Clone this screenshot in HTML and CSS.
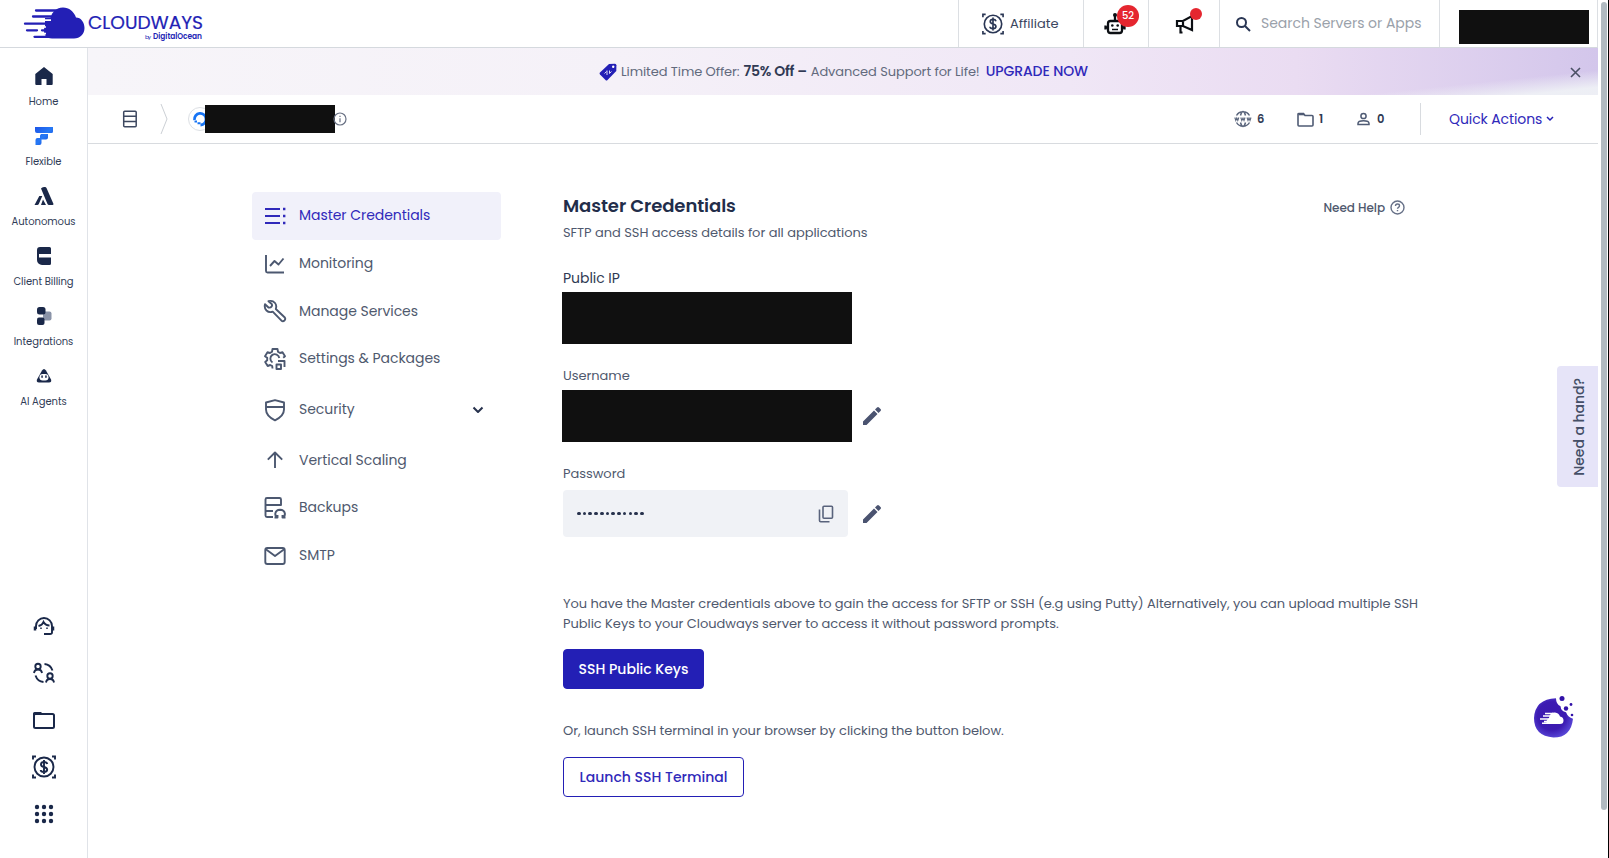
FILE: index.html
```html
<!DOCTYPE html>
<html lang="en">
<head>
    <meta charset="UTF-8">
    <title>Master Credentials</title>
    <link rel="stylesheet" href="styles.css">
</head>
<body>
    <div class="page">
        <header class="topbar">
            <a class="logo" href="#">
                <svg width="184" height="38" viewBox="0 0 184 38">
                    <g fill="#231fb5">
                        <path d="M29 33.500c-6 0-8-4-8-8 0-5 3-8 6-9 0-8 6-14 13-14 6 0 11 4 13 10 5 0 8.500 5 8.500 10.500 0 6-4.500 10.500-10.500 10.500z"/>
                        <path d="M22 13h10v12H22z"/>
                    </g>
                    <g stroke="#231fb5" stroke-width="2.300" stroke-linecap="round">
                        <path d="M13 5.500h22M10 11.500h18M2 18.700h22M4 25.300h10M19 25.300h5M11.500 31.800h20"/>
                    </g>
                    <path d="M18 15.100h10M14 22h9M17 28.600h6" stroke="#fff" stroke-width="1.600"/>
                    <text class="logo-name" x="65" y="24" textLength="115" lengthAdjust="spacingAndGlyphs">CLOUDWAYS</text>
                    <text class="logo-by" x="122" y="33.500" textLength="6">by</text>
                    <text class="logo-do" x="130" y="33.500" textLength="49" lengthAdjust="spacingAndGlyphs">DigitalOcean</text>
                </svg>
            </a>
            <div class="top-cell affiliate">
                <svg width="22" height="22" viewBox="0 0 24 24" fill="none" stroke="#2a3654" stroke-width="1.800">
                    <use href="#dollar"/>
                </svg>
                <span>Affiliate</span>
            </div>
            <div class="top-cell robot">
                <svg width="22" height="23" viewBox="0 0 22 23" fill="none" stroke="#0c0f14" stroke-width="2.300">
                    <rect x="4" y="9" width="14" height="12" rx="2.500"/>
                    <path d="M11 9V3M1.500 13.500v4M20.500 13.500v4M1 15.500h3M18 15.500h3"/>
                    <path d="M8 17.500h6" stroke-width="1.500"/>
                    <g fill="#0c0f14" stroke="none"><circle cx="8.300" cy="13.500" r="1.300"/><circle cx="13.700" cy="13.500" r="1.300"/><circle cx="11" cy="3" r="2"/></g>
                </svg>
                <span class="badge">52</span>
            </div>
            <div class="top-cell news">
                <svg width="20" height="20" viewBox="0 0 20 20" fill="none" stroke="#0c0f14" stroke-width="2.200">
                    <path d="M2 7h6l9-5v14l-9-4H2zM8 7v5M5.500 12v6.500h2M17 6.500v5"/>
                </svg>
                <span class="dot"></span>
            </div>
            <div class="top-cell search">
                <svg width="16" height="16" viewBox="0 0 16 16" fill="none" stroke="#2a3654" stroke-width="2">
                    <circle cx="6.500" cy="6.500" r="4.500"/><path d="M10 10l5 5"/>
                </svg>
                <span>Search Servers or Apps</span>
            </div>
            <div class="top-cell account"><div class="redacted account-box"></div></div>
        </header>

        <aside class="sidebar">
            <nav class="side-top">
                <a href="#"><svg width="20" height="20" viewBox="0 0 20 20"><path fill="#1a2849" d="M10 1l8.700 7v10a1 1 0 0 1-1 1H12.500v-6h-5v6H2.300a1 1 0 0 1-1-1V8z"/></svg>Home</a>
                <a href="#"><svg width="20" height="20" viewBox="0 0 20 20"><defs><linearGradient id="flex" x1="0" y1="0" x2="1" y2="1"><stop offset="0" stop-color="#1d55e8"/><stop offset=".5" stop-color="#2679f5"/><stop offset="1" stop-color="#1744d2"/></linearGradient></defs><path fill="url(#flex)" d="M1 1h18v4.500a1.500 1.500 0 0 1-1.500 1.500H3a2 2 0 0 1-2-2zM7 8h7v3.500a2 2 0 0 1-2 2H7.500V17a2 2 0 0 1-2 2H1.500v-5a2 2 0 0 1 2-2H6V9.500z"/></svg>Flexible</a>
                <a href="#"><svg width="20" height="20" viewBox="0 0 20 20"><path fill="#1a2849" d="M7 2.500Q8 1 10 1h1q1 0 1.500 1L19.500 18q0 1-1 1H15q-1 0-1.500-1zM5.300 10h3L4.800 18q-.5 1-1.500 1H.5zM9 13.500l3 5.500H7z"/></svg>Autonomous</a>
                <a href="#"><svg width="20" height="20" viewBox="0 0 20 20"><path fill="#1a2849" d="M6 1h9.500a1.500 1.500 0 0 1 1.500 1.500V8H5v3.500h12v6a1.500 1.500 0 0 1-1.500 1.500H8a5 5 0 0 1-5-5V4a3 3 0 0 1 3-3z"/></svg>Client Billing</a>
                <a href="#"><svg width="20" height="20" viewBox="0 0 20 20"><rect x="9" y="5.500" width="8.500" height="9" rx="2" fill="#8a93a8"/><rect x="3" y="1" width="8.500" height="7.500" rx="2.500" fill="#1a2849"/><rect x="3" y="11.500" width="7.500" height="7.500" rx="2" fill="#1a2849"/></svg>Integrations</a>
                <a href="#"><svg width="20" height="20" viewBox="0 0 20 20"><path fill="#1a2849" d="M8 4.500q2-3 4 0l5 9q1 3-2 3H5q-3 0-2-3z"/><rect x="5.500" y="8" width="9" height="6.500" rx="3.200" fill="#fff"/><rect x="7.300" y="9.300" width="1.500" height="2.600" rx=".7" fill="#1a2849"/><rect x="11.200" y="9.300" width="1.500" height="2.600" rx=".7" fill="#1a2849"/></svg>AI Agents</a>
            </nav>
            <nav class="side-bottom">
                <svg width="24" height="24" viewBox="0 0 24 24" fill="none" stroke="#1a2849" stroke-width="1.900">
                    <path d="M4 15v-3a8 8 0 0 1 16 0v6.500q0 1.500-2 1.500h-6M6.500 12q4-1 5-4 2 3.500 6 3.500"/><path d="M3 12.500v4M21 12.500v4" stroke-width="2.500"/><path d="M9 13.500v1.500M15 13.500v1.500" stroke-width="1.500"/>
                </svg>
                <svg width="24" height="24" viewBox="0 0 24 24" fill="none" stroke="#1a2849" stroke-width="1.900">
                    <circle cx="6" cy="5.500" r="2.700"/><path d="M2 12q.5-3.500 4-3.500t4 3.500"/><circle cx="18" cy="15" r="2.700"/><path d="M14 21.500q.5-3.500 4-3.500t4 3.500M12.500 3q6 .5 8 6.500M3.500 14.500q2 6 8 6.500"/>
                </svg>
                <svg width="24" height="24" viewBox="0 0 24 24" fill="none" stroke="#1a2849" stroke-width="2">
                    <rect x="2" y="6" width="20" height="14" rx="1.500"/><path fill="#1a2849" stroke="none" d="M1 7V5.500Q1 4 2.500 4H9l2.500 2.500z"/>
                </svg>
                <svg width="24" height="24" viewBox="0 0 24 24" fill="none" stroke="#1a2849" stroke-width="1.900">
                    <g id="dollar"><circle cx="12" cy="12" r="9.500"/><path d="M15.300 9q-.6-2-3.300-2-3 0-3 2.400 0 2 3 2.600t3.200 2.600q0 2.400-3.200 2.400T8.700 15M12 5v14"/><path d="M1 4.500V1.500h3M20 1.500h3v3M1 19.500v3h3M20 22.500h3v-3"/></g>
                </svg>
                <svg width="24" height="24" viewBox="0 0 24 24" fill="#1a2849">
                    <circle cx="5" cy="5" r="2.200"/><circle cx="12" cy="5" r="2.200"/><circle cx="19" cy="5" r="2.200"/>
                    <circle cx="5" cy="12" r="2.200"/><circle cx="12" cy="12" r="2.200"/><circle cx="19" cy="12" r="2.200"/>
                    <circle cx="5" cy="19" r="2.200"/><circle cx="12" cy="19" r="2.200"/><circle cx="19" cy="19" r="2.200"/>
                </svg>
            </nav>
        </aside>

        <main class="main">
            <div class="promo">
                <svg width="18" height="18" viewBox="0 0 18 18"><path fill="#231fb5" d="M10 1l6-.3q1.300 0 1.400 1.500L17.300 8 8.500 17q-1 1-2 0L1 11.500q-1-1 0-2z"/><circle cx="14.200" cy="3.800" r="1.200" fill="#fff"/><path d="M5.500 10.500l2-2M8 12V7.500M10.500 7.500v3l2-2" stroke="#d9d8f5" fill="none"/></svg>
                <span class="promo-lead">Limited Time Offer:</span>
                <b>75% Off –</b>
                <span class="promo-rest">Advanced Support for Life!</span>
                <a href="#">UPGRADE NOW</a>
                <svg class="promo-close" width="11" height="11" viewBox="0 0 11 11" stroke="#4a5064" stroke-width="1.600"><path d="M1 1l9 9M10 1l-9 9"/></svg>
            </div>

            <div class="serverbar">
                <svg class="server-icon" width="16" height="18" viewBox="0 0 16 18" fill="none" stroke="#3d4860" stroke-width="1.500"><rect x="1.700" y="1.200" width="12.500" height="15.500" rx="1"/><path d="M2 6.300h12M2 11.500h12"/></svg>
                <svg class="crumb" width="8" height="32" viewBox="0 0 8 32" fill="none" stroke="#ccd0d5"><path d="M1 1l6 15-6 15"/></svg>
                <span class="provider"><svg width="16" height="16" viewBox="0 0 16 16" fill="none" stroke="#1674f5" stroke-width="2.800"><path d="M2.500 9A5.800 5.800 0 1 1 8.500 14"/><path d="M5.500 12.200h3M2.500 10.500h2.500" stroke-width="2"/></svg></span>
                <div class="redacted name-box"></div>
                <svg class="info" width="14" height="14" viewBox="0 0 14 14" fill="none" stroke="#697184" stroke-width="1.200"><circle cx="7" cy="7" r="6"/><path d="M7 6.300v4M7 3.700v1.400"/></svg>
                <div class="stat stat-www">
                    <svg width="18" height="18" viewBox="0 0 18 18" fill="none" stroke="#5b667d" stroke-width="1.500"><path d="M2.500 5.500a7.500 7.500 0 0 1 13 0M2.500 12.500a7.500 7.500 0 0 0 13 0M6.500 5.500Q7.300 2 9 1.500q1.700.5 2.500 4M6.500 12.500q.8 3.500 2.500 4 1.700-.5 2.500-4"/><path stroke-width="1.100" d="M.8 7.500l1 3 1-2.500 1 2.500 1-3M6.800 7.500l1 3L9 8l1 2.500 1-3M13 7.500l1 3 1-2.500 1 2.500 1-3"/></svg>6
                </div>
                <div class="stat stat-apps">
                    <svg width="17" height="15" viewBox="0 0 17 15" fill="none" stroke="#4f5b74" stroke-width="1.600"><path d="M1 2v11q0 1 1 1h13q1 0 1-1V4.500q0-1-1-1H8L6.500 1.500H2Q1 1.500 1 2z"/><path d="M1.500 2.300H7" stroke-width="2"/></svg>1
                </div>
                <div class="stat stat-users">
                    <svg width="13" height="14" viewBox="0 0 13 14" fill="none" stroke="#4f5b74" stroke-width="1.500"><circle cx="6.500" cy="4" r="2.600"/><path d="M1 12.500v-1q0-2.700 5.500-2.700T12 11.500v1z"/></svg>0
                </div>
                <div class="quick">Quick Actions <svg width="8" height="6" viewBox="0 0 8 6" fill="none" stroke="#231fb5" stroke-width="1.500"><path d="M1 1l3 3 3-3"/></svg></div>
            </div>

            <div class="content">
                <nav class="menu">
                    <a class="active" href="#"><svg width="24" height="24" viewBox="0 0 24 24"><path d="M2 5h15M2 12h15M2 19h15"/><path d="M20 5h2.400M20 12h2.400M20 19h2.400" stroke-width="2.400"/></svg>Master Credentials</a>
                    <a href="#"><svg width="24" height="24" viewBox="0 0 24 24"><path d="M3 3v16q0 1.500 1.500 1.500H21M7 14l4.500-5 4 3.500 5-6"/></svg>Monitoring</a>
                    <a href="#"><svg width="24" height="24" viewBox="0 0 24 24"><path d="M5.500 2.200Q9.500 1 12 4q2 2.500.8 6l9 8.500q1 1.500-.3 3-1.500 1.200-3 .2l-8.800-9Q6 14 3.500 11.500 1 8.800 2 5.200l3.500 3.300Q7.500 9 8.500 7.700 9.500 6.500 8.700 5z"/></svg>Manage Services</a>
                    <a href="#"><svg width="24" height="24" viewBox="0 0 24 24"><path d="M9.500 21.500l-.3-2.500-2-1-2.500 1-2.500-4 2-1.700v-2.600L2 9.200l2.500-4L7 6l2-1.200.5-2.800h5l.5 2.800L17 6l2.500-.8 2.500 4-1.800 1.500"/><path d="M9.500 15.500A4.500 4.500 0 1 1 16.300 11"/><rect x="13.500" y="17.500" width="4.500" height="4.500"/><path d="M15 14h6.500v6"/></svg>Settings &amp; Packages</a>
                    <a class="has-sub" href="#"><svg width="24" height="24" viewBox="0 0 24 24"><path d="M12 2.200l9 2.300v7q0 6.500-9 10.800Q3 18 3 11.500v-7zM3 9h18"/></svg>Security<svg class="arrow" width="12" height="8" viewBox="0 0 12 8"><path d="M1.500 1.500L6 6l4.500-4.500"/></svg></a>
                    <a href="#"><svg width="24" height="24" viewBox="0 0 24 24"><path d="M12 20V4.500M4.800 11.700L12 4.500l7.200 7.200"/></svg>Vertical Scaling</a>
                    <a href="#"><svg width="24" height="24" viewBox="0 0 24 24"><path d="M10 21H4q-1.500 0-1.500-1.500v-16Q2.500 2 4 2h12.500Q18 2 18 3.500V9H2.500M10 15H2.500"/><path d="M14.500 21.500q-2.500-1.500-2.200-4 .7-3.500 4.700-3.700 4.200.2 4.900 3.700.3 2.500-2.200 4M11.500 21.500h3v-2.500M22.500 21.500h-3v-2.500"/></svg>Backups</a>
                    <a href="#"><svg width="24" height="24" viewBox="0 0 24 24"><rect x="2.300" y="4" width="19.400" height="16" rx="2"/><path d="M2.500 5l9.500 7 9.500-7"/></svg>SMTP</a>
                </nav>

                <section class="panel">
                    <div class="panel-head">
                        <h1>Master Credentials</h1>
                        <div class="help">Need Help <svg width="15" height="15" viewBox="0 0 15 15" fill="none" stroke="#667087" stroke-width="1.400"><circle cx="7.500" cy="7.500" r="6.500"/><path d="M5.500 6q0-2 2-2t2 1.700q0 1-1 1.600t-1 1.400M7.500 10v1.300"/></svg></div>
                    </div>
                    <p class="subtitle">SFTP and SSH access details for all applications</p>

                    <label class="label-ip">Public IP</label>
                    <div class="redacted field-box"></div>

                    <label class="label-user">Username</label>
                    <div class="field-row">
                        <div class="redacted field-box"></div>
                        <svg class="edit" width="20" height="20" viewBox="0 0 20 20" fill="#4a5370"><path d="M1 15.500L12 4.500l3.500 3.500-11 11H1zM13 3.500l2-2q1-1 2 0L18.500 3q1 1 0 2l-2 2z"/></svg>
                    </div>

                    <label class="label-pass">Password</label>
                    <div class="field-row">
                        <div class="password">
                            <span class="mask"><i></i><i></i><i></i><i></i><i></i><i></i><i></i><i></i><i></i><i></i><i></i><i></i></span>
                            <svg width="16" height="18" viewBox="0 0 16 18" fill="none" stroke="#59637c" stroke-width="1.600"><rect x="5" y="1.200" width="9.500" height="12" rx="1"/><path d="M1.500 4.500v11q0 1.200 1.200 1.200h8.800"/></svg>
                        </div>
                        <svg class="edit" width="20" height="20" viewBox="0 0 20 20" fill="#4a5370"><path d="M1 15.500L12 4.500l3.500 3.500-11 11H1zM13 3.500l2-2q1-1 2 0L18.500 3q1 1 0 2l-2 2z"/></svg>
                    </div>

                    <p class="keys-text">You have the Master credentials above to gain the access for SFTP or SSH (e.g using Putty) Alternatively, you can upload multiple SSH<br>Public Keys to your Cloudways server to access it without password prompts.</p>
                    <button class="btn btn-keys">SSH Public Keys</button>
                    <p class="terminal-text">Or, launch SSH terminal in your browser by clicking the button below.</p>
                    <button class="btn btn-terminal">Launch SSH Terminal</button>
                </section>
            </div>
        </main>

        <div class="hand"><span>Need a hand?</span></div>
        <svg class="bot" width="42" height="44" viewBox="0 0 42 44">
            <defs><radialGradient id="orb" cx=".45" cy=".45" r=".6"><stop offset="0" stop-color="#3a18ae"/><stop offset=".6" stop-color="#3c1bb2"/><stop offset="1" stop-color="#5c4cdb"/></radialGradient></defs>
            <path fill="url(#orb)" d="M23 3.200q0 6 4.500 8 .5 5 5.500 6 2 5 7 6.500Q38 42.500 20.500 42.500 1 41 1 23 2 4 23 3.200z"/>
            <g fill="#3212a8"><circle cx="29" cy="3.500" r="2.500"/><circle cx="33" cy="13.500" r="2.200"/><circle cx="38" cy="9.500" r="1.400"/><circle cx="39" cy="20" r="1.300"/></g>
            <path fill="#fff" d="M14 29q-2-3 2-6 1-6 6-5.500 4 .5 5 4 3.500.5 3.500 4T27 29z"/>
            <path stroke="#fff" stroke-width="1.400" d="M12 18.500h8M10 21h8M7 24h9M11 26.500h4M9 28.300h8"/>
        </svg>
    </div>
    <div class="scrollbar"><div class="thumb"></div></div>
</body>
</html>
```
FILE: styles.css
```css
* {
    box-sizing: border-box;
}

body {
    margin: 0;
    height: 858px;
    display: flex;
    overflow: hidden;
    background: #fff;
    color: #4f596e;
    font-family: Poppins, Inter, "Open Sans", sans-serif;
    font-size: 13px;
    letter-spacing: -0.040px;
}

svg {
    display: block;
    flex: none;
}

a {
    color: inherit;
    text-decoration: none;
}

h1, p {
    margin: 0;
}

.redacted {
    background: #101010;
    flex: none;
}

.page {
    position: relative;
    width: 1598px;
    height: 858px;
    display: grid;
    grid-template-columns: 88px 1fr;
    grid-template-rows: 48px 1fr;
}

/* top bar */
.topbar {
    grid-column: 1 / 3;
    display: flex;
    border-right: 1px solid #dcdfe3;
    border-bottom: 1px solid #d5d9de;
}

.logo {
    margin: 5px auto 0 23px;
}

.logo-name {
    font-size: 17px;
    font-weight: 400;
    fill: #231fb5;
    stroke: #231fb5;
    stroke-width: 0.2px;
}

.logo-by {
    font-size: 6px;
    fill: #231fb5;
}

.logo-do {
    font-size: 8px;
    font-weight: 600;
    fill: #231fb5;
}

.top-cell {
    position: relative;
    display: flex;
    align-items: center;
    border-left: 1px solid #dcdfe3;
}

.affiliate {
    width: 125px;
    padding-left: 23px;
    gap: 6px;
    color: #3b4660;
    letter-spacing: 0;
}

.robot {
    width: 65px;
    padding-left: 20px;
}

.news {
    width: 71px;
    padding-left: 26px;
}

.badge {
    position: absolute;
    left: 33px;
    top: 5px;
    width: 22px;
    height: 22px;
    border-radius: 50%;
    background: #e5262f;
    color: #fff;
    font-size: 10px;
    font-weight: 500;
    line-height: 22px;
    text-align: center;
}

.dot {
    position: absolute;
    left: 41px;
    top: 8px;
    width: 12px;
    height: 12px;
    border-radius: 50%;
    background: #e5262f;
}

.search {
    width: 220px;
    padding-left: 15px;
    gap: 10px;
    color: #9aa1aa;
    font-size: 14px;
}

.account {
    width: 158px;
    padding: 7px 0 0 19px;
}

.account-box {
    width: 130px;
    height: 34px;
}

/* left sidebar */
.sidebar {
    display: flex;
    flex-direction: column;
    justify-content: space-between;
    border-right: 1px solid #e0e3e8;
}

.side-top a {
    height: 60px;
    display: flex;
    flex-direction: column;
    align-items: center;
    gap: 8.500px;
    padding-top: 18px;
    color: #303c56;
    font-size: 10px;
    line-height: 14px;
}

.side-bottom {
    display: flex;
    flex-direction: column;
    align-items: center;
    gap: 23px;
    padding-bottom: 32px;
}

/* promo strip */
.promo {
    position: relative;
    height: 47px;
    display: flex;
    align-items: center;
    padding-left: 511px;
    white-space: nowrap;
    color: #626a7d;
    background:
        linear-gradient(174deg, transparent 0 74%, rgba(240, 243, 246, 0.9) 92%) right / 470px 47px no-repeat,
        linear-gradient(90deg, #f7f5f9 0%, #f5f1f8 35%, #f0e7f6 65%, #eadcf2 80%, #d3c6eb 100%);
}

.promo b {
    margin: 0 4px;
    color: #303a54;
    font-size: 14px;
    font-weight: 600;
    letter-spacing: -0.250px;
}

.promo-lead {
    margin-left: 4px;
    letter-spacing: -0.080px;
}

.promo-rest {
    letter-spacing: -0.080px;
}

.promo a {
    margin-left: 6px;
    color: #3029ba;
    font-size: 14px;
    font-weight: 500;
    letter-spacing: -0.100px;
}

.promo-close {
    position: absolute;
    right: 17px;
    top: 19px;
}

/* server bar */
.serverbar {
    height: 49px;
    display: flex;
    align-items: center;
    border-bottom: 1px solid #d8dbdf;
}

.server-icon {
    margin-left: 34px;
}

.crumb {
    margin-left: 22px;
}

.provider {
    width: 24px;
    height: 24px;
    flex: none;
    margin: 0 -7px 0 20px;
    padding: 3px;
    border: 1px solid #dcdfe4;
    border-radius: 50%;
}

.name-box {
    width: 130px;
    height: 28px;
}

.info {
    margin-left: -2px;
}

.stat {
    display: flex;
    align-items: center;
    gap: 5px;
    color: #303a54;
    font-size: 11.500px;
    font-weight: 600;
}

.stat-www {
    width: 63px;
    margin-left: auto;
}

.stat-apps {
    width: 60px;
}

.stat-users {
    width: 63px;
    gap: 7px;
}

.quick {
    display: flex;
    align-items: center;
    gap: 4px;
    width: 178px;
    height: 32px;
    padding-left: 28px;
    border-left: 1px solid #d8dbdf;
    color: #3029ba;
    font-size: 14px;
    letter-spacing: -0.100px;
    white-space: nowrap;
}

/* settings menu */
.content {
    display: flex;
    padding: 48px 0 0 163.500px;
}

.menu {
    width: 249.500px;
    flex: none;
}

.menu a {
    height: 47.700px;
    display: flex;
    align-items: center;
    padding: 0 17px 0 11.500px;
    font-size: 14px;
    letter-spacing: -0.050px;
}

.menu a svg {
    margin-right: 12px;
    fill: none;
    stroke: #4c5870;
    stroke-width: 1.900;
    stroke-linejoin: round;
}

.menu a.active {
    border-radius: 4px;
    background: #f1f1fa;
    color: #3029ba;
}

.menu a.active svg {
    stroke: #3029ba;
}

.menu a.has-sub {
    height: 53.700px;
}

.menu a svg.arrow {
    margin: 0 0 0 auto;
    stroke: #27324d;
    stroke-width: 2;
}

/* credentials */
.panel {
    padding-left: 62px;
    width: 930px;
}

.panel-head {
    display: flex;
    justify-content: space-between;
    height: 28px;
    padding-right: 26px;
}

h1 {
    color: #222d4a;
    font-size: 18px;
    font-weight: 600;
    line-height: 27px;
    letter-spacing: -0.080px;
}

.help {
    display: flex;
    align-items: center;
    gap: 5px;
    padding-top: 3px;
    font-size: 12px;
    font-weight: 500;
}

.subtitle {
    line-height: 26px;
}

label {
    display: block;
    line-height: 20px;
}

.label-ip {
    margin: 22px 0 4px;
    color: #303a54;
    font-size: 14px;
}

.label-user {
    margin: 22px 0 4px;
}

.label-pass {
    margin: 22px 0 6px;
}

.field-box {
    width: 290px;
    height: 52px;
    margin-left: -1px;
}

.field-row {
    display: flex;
    align-items: center;
}

.edit {
    margin-left: 10px;
}

.password {
    width: 285px;
    height: 47px;
    display: flex;
    align-items: center;
    justify-content: space-between;
    padding: 0 14px;
    border-radius: 4px;
    background: #f0f2f6;
}

.password + .edit {
    margin-left: 14px;
}

.mask {
    display: flex;
    gap: 2.150px;
}

.mask i {
    width: 3.600px;
    height: 3.600px;
    border-radius: 50%;
    background: #27324d;
}

.keys-text {
    margin: 56px 0 16px;
    padding-top: 1px;
    height: 40px;
    line-height: 20px;
    white-space: nowrap;
}

.btn {
    display: block;
    height: 40px;
    padding: 0;
    border: 1px solid #231fb5;
    border-radius: 4px;
    font-family: inherit;
    font-size: 14px;
    font-weight: 500;
}

.btn-keys {
    width: 141px;
    background: #231fb5;
    color: #fff;
}

.terminal-text {
    margin: 32px 0 16px;
    line-height: 20px;
}

.btn-terminal {
    width: 181px;
    background: #fff;
    color: #3029ba;
}

/* floating helpers */
.hand {
    position: absolute;
    right: 0;
    top: 366px;
    width: 41px;
    height: 121px;
    padding-left: 3px;
    display: flex;
    align-items: center;
    justify-content: center;
    border-radius: 4px 0 0 4px;
    background: #e6e4f8;
    color: #454f67;
    font-size: 14px;
    font-weight: 500;
}

.hand span {
    writing-mode: vertical-rl;
    transform: rotate(180deg);
    white-space: nowrap;
}

.bot {
    position: absolute;
    left: 1533px;
    top: 695px;
}

.scrollbar {
    width: 11px;
    padding: 2px 1px 0 3px;
    border-right: 1px solid #000;
}

.thumb {
    height: 808px;
    border-radius: 3px;
    background: #b1bac1;
}
```
